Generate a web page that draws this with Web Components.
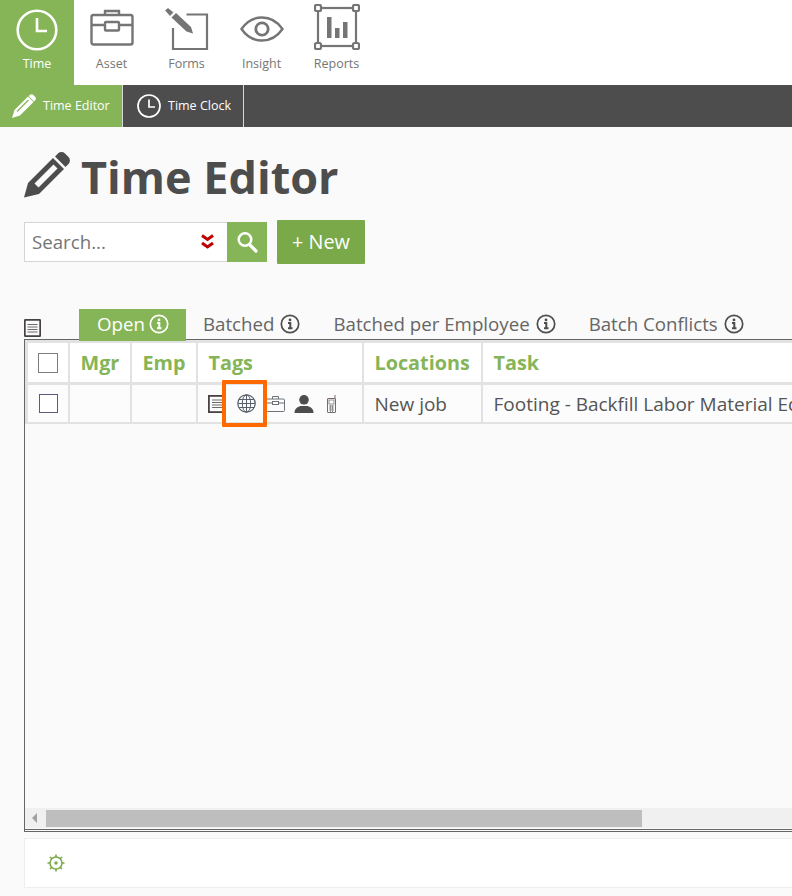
<!DOCTYPE html>
<html>
<head>
<meta charset="utf-8">
<title>Time Editor</title>
<style>
  html, body { margin: 0; height: 896px; overflow: hidden; background: #fafafa; }
  body { font-family: "Open Sans", "Liberation Sans", sans-serif; color: #4d4d4d; }
</style>
</head>
<body>
<app-nav>
  <nav-item label="Time" active>
    <svg width="44" height="44" viewBox="0 0 44 44" fill="none" stroke="#fff" stroke-width="2.6"><circle cx="22" cy="22" r="19.300"/><path d="M22 10v13h10" stroke-width="2.600"/></svg>
  </nav-item>
  <nav-item label="Asset">
    <svg width="44" height="44" viewBox="0 0 44 44" fill="none" stroke="#757575" stroke-width="2.4"><rect x="1.500" y="7" width="41" height="29.500" rx="2"/><path d="M1.500 17H15M29 17h13.500"/><path d="M15 7V3h14v4"/><rect x="15" y="14" width="14" height="8.500" rx="1"/></svg>
  </nav-item>
  <nav-item label="Forms">
    <svg width="44" height="44" viewBox="0 0 44 44" fill="none" stroke="#757575" stroke-width="2.200"><path d="M21.500 6.500H42V41H8V20"/><path d="M0.500 2.500 3 0.500 8 4.500 5 7.500z" fill="#757575" stroke="#757575" stroke-width="0.800" stroke-linejoin="round"/><path d="M6.500 9.500 11 5 26 19 28 25.500 21.500 23.500z" fill="#757575" stroke="none"/></svg>
  </nav-item>
  <nav-item label="Insight">
    <svg width="44" height="44" viewBox="0 0 44 44" fill="none" stroke="#757575" stroke-width="2.400"><path d="M1.500 21C7 13 14 9.500 22 9.500S37 13 42.500 21C37 29 30 32.500 22 32.500S7 29 1.500 21z"/><circle cx="22" cy="21" r="6.200" stroke-width="2.800"/></svg>
  </nav-item>
  <nav-item label="Reports">
    <svg style="margin-bottom:6px" width="46" height="46" viewBox="0 0 46 46" fill="none" stroke="#757575" stroke-width="2.200"><rect x="4" y="4" width="38" height="38"/><g fill="#fff"><rect x="1" y="1" width="6" height="6" rx="1.500"/><rect x="39" y="1" width="6" height="6" rx="1.500"/><rect x="1" y="39" width="6" height="6" rx="1.500"/><rect x="39" y="39" width="6" height="6" rx="1.500"/></g><g fill="#757575" stroke="none"><rect x="13" y="13" width="4.500" height="21"/><rect x="21" y="24" width="4.500" height="10"/><rect x="29" y="18" width="4.500" height="16"/></g></svg>
  </nav-item>
</app-nav>
<sub-nav>
  <sub-tab label="Time Editor" active>
    <svg width="26" height="26" viewBox="0 0 26 26"><path d="M1 25l2.500-8L17 3.500 22.500 9 9 22.500z" fill="#fff"/><path d="M18.500 2.200a3 3 0 0 1 4.200 0l1.200 1.200a3 3 0 0 1 0 4.200L23 8.500 17.600 3z" fill="#fff"/><path d="M6 18.500 17.500 7" stroke="#86b557" stroke-width="1.300"/></svg>
  </sub-tab>
  <sub-tab label="Time Clock">
    <svg width="24" height="24" viewBox="0 0 24 24" fill="none" stroke="#fff" stroke-width="1.700"><circle cx="12" cy="12" r="11"/><path d="M12 5.500v7.500h6"/></svg>
  </sub-tab>
</sub-nav>
<page-title>Time Editor</page-title>
<search-bar></search-bar>
<tab-strip>
  <tab-item active>Open</tab-item>
  <tab-item>Batched</tab-item>
  <tab-item>Batched per Employee</tab-item>
  <tab-item>Batch Conflicts</tab-item>
</tab-strip>
<time-grid></time-grid>
<foot-bar></foot-bar>

<script>
class AppNav extends HTMLElement {
  connectedCallback() {
    this.attachShadow({ mode: 'open' });
    this.shadowRoot.innerHTML = `
      <style>
        :host { display: flex; height: 85px; background: #fff; }
      </style>
      <slot></slot>
    `;
  }
}

class NavItem extends HTMLElement {
  connectedCallback() {
    this.attachShadow({ mode: 'open' });
    this.shadowRoot.innerHTML = `
      <style>
        :host {
          display: flex;
          flex-direction: column;
          align-items: center;
          width: 75px;
          height: 85px;
          box-sizing: border-box;
          padding-top: 6px;
          color: #757575;
          font-size: 12.500px;
        }
        :host([active]) { width: 74px; background: #86b557; color: #fff; }
        .icon { height: 48px; display: flex; align-items: center; }
        .label { line-height: 18px; margin-top: 1px; }
      </style>
      <div class="icon"><slot></slot></div>
      <div class="label">${this.getAttribute('label')}</div>
    `;
  }
}

class SubNav extends HTMLElement {
  connectedCallback() {
    this.attachShadow({ mode: 'open' });
    this.shadowRoot.innerHTML = `
      <style>
        :host { display: flex; height: 42px; background: #4d4d4d; }
      </style>
      <slot></slot>
    `;
  }
}

class SubTab extends HTMLElement {
  connectedCallback() {
    this.attachShadow({ mode: 'open' });
    this.shadowRoot.innerHTML = `
      <style>
        :host {
          display: flex;
          align-items: center;
          gap: 7px;
          width: 121px;
          box-sizing: border-box;
          padding-left: 14px;
          border-right: 1px solid #d8d8d8;
          color: #fff;
          font-size: 12.500px;
        }
        :host([active]) { width: 123px; padding-left: 11px; gap: 6px; background: #86b557; }
        svg { display: block; }
        span { margin-top: -2px; }
      </style>
      <slot></slot>
      <span>${this.getAttribute('label')}</span>
    `;
  }
}

class PageTitle extends HTMLElement {
  connectedCallback() {
    this.attachShadow({ mode: 'open' });
    this.shadowRoot.innerHTML = `
      <style>
        :host {
          display: flex;
          align-items: center;
          gap: 11px;
          padding: 25px 0 0 24px;
          height: 46px;
          color: #4d4d4d;
          font-size: 45px;
          font-weight: 700;
          line-height: 46px;
        }
        svg { display: block; }
        span { margin-top: 4px; }
      </style>
      <svg width="46" height="46" viewBox="0 0 46 46">
        <path d="M0 45.500 4 31 29 6 40 17 15 42z" fill="#4d4d4d"/>
        <path d="M31 4.500 34 1.500a5 5 0 0 1 7 0L44.500 5a5 5 0 0 1 0 7L41.500 15z" fill="#4d4d4d"/>
        <path d="M10.500 31.500 29.500 12.500 33.500 16.500 14.500 35.500z" fill="#fafafa"/>
      </svg>
      <span><slot></slot></span>
    `;
  }
}

class SearchBar extends HTMLElement {
  connectedCallback() {
    this.attachShadow({ mode: 'open' });
    this.shadowRoot.innerHTML = `
      <style>
        :host {
          display: flex;
          align-items: center;
          margin: 22px 0 0 24px;
          height: 44px;
        }
        .box {
          display: flex;
          align-items: center;
          justify-content: space-between;
          width: 203px;
          height: 40px;
          box-sizing: border-box;
          padding: 0 13px 0 7px;
          background: #fff;
          border: 1px solid #d5d5d5;
          border-right: 0;
          color: #757575;
          font-size: 18.700px;
        }
        .box span { margin-top: -2px; }
        .go {
          display: flex;
          align-items: center;
          justify-content: center;
          width: 40px;
          height: 40px;
          background: #86b557;
        }
        .new {
          display: flex;
          align-items: center;
          justify-content: center;
          margin-left: 10px;
          width: 88px;
          height: 44px;
          box-sizing: border-box;
          padding-bottom: 2px;
          background: #7aa949;
          border-radius: 1px;
          color: #fff;
          font-size: 19.800px;
        }
        svg { display: block; }
      </style>
      <div class="box">
        <span>Search...</span>
        <svg width="13" height="16" viewBox="0 0 13 16" fill="none" stroke="#c00000" stroke-width="3"><path d="M1 1.500 6.500 5.500 12 1.500"/><path d="M1 9 6.500 13 12 9"/></svg>
      </div>
      <div class="go">
        <svg width="22" height="22" viewBox="0 0 22 22" fill="none" stroke="#fff"><circle cx="9" cy="8.500" r="6.300" stroke-width="2.500"/><path d="M13.500 13.500 20 20" stroke-width="3.200" stroke-linecap="round"/></svg>
      </div>
      <div class="new">+ New</div>
    `;
  }
}

class TabStrip extends HTMLElement {
  connectedCallback() {
    this.attachShadow({ mode: 'open' });
    this.shadowRoot.innerHTML = `
      <style>
        :host {
          display: flex;
          align-items: flex-end;
          margin: 45px 0 0 24px;
          height: 32px;
          position: relative;
          z-index: 1;
        }
        svg { display: block; margin: 0 38px 4px 0; flex: none; }
      </style>
      <svg width="17" height="18" viewBox="0 0 17 18" fill="none"><rect x="0.800" y="0.800" width="15.400" height="16.400" rx="1" stroke="#4a4048" stroke-width="1.800"/><path d="M3.500 5.500h10M3.500 8h10M3.500 10.500h10M3.500 13h10" stroke="#6a6a6a"/></svg>
      <slot></slot>
    `;
  }
}

class TabItem extends HTMLElement {
  connectedCallback() {
    this.attachShadow({ mode: 'open' });
    const on = this.hasAttribute('active');
    const c = on ? '#fff' : '#4d4d4d';
    this.shadowRoot.innerHTML = `
      <style>
        :host {
          display: flex;
          align-items: center;
          gap: 6px;
          height: 32px;
          box-sizing: border-box;
          padding: 0 16px 4px 17px;
          white-space: nowrap;
          color: #666;
          font-size: 18.700px;
        }
        :host([active]) { width: 107px; padding-left: 18px; padding-right: 0; gap: 4.500px; background: #86b557; color: #fff; }
        svg { display: block; margin-top: 2px; flex: none; }
      </style>
      <span><slot></slot></span>
      <svg width="20" height="20" viewBox="0 0 20 20" fill="none" stroke="${c}" stroke-width="1.700"><circle cx="10" cy="10" r="8.700"/><path d="M8 9h2.300v5M8 14.300h4.500" stroke-width="2"/><circle cx="10" cy="5.900" r="1.400" fill="${c}" stroke="none"/></svg>
    `;
  }
}

class TimeGrid extends HTMLElement {
  connectedCallback() {
    this.attachShadow({ mode: 'open' });
    this.shadowRoot.innerHTML = `
      <style>
        :host {
          display: flex;
          flex-direction: column;
          position: relative;
          margin: -2px -60px 0 24px;
          height: 489px;
          border-top: 1px solid #666;
          border-left: 1px solid #666;
          border-bottom: 3px double #666;
          background: #fafafa;
        }
        .grid {
          display: grid;
          grid-template-columns: 40px 60px 64px 164px 117px 1fr;
          grid-template-rows: 39px 37px;
          gap: 3px 2px;
          padding: 3px 0 2px 3px;
          background: #e2e2e2;
          flex: none;
          color: #555;
          font-size: 19px;
        }
        .grid > div { background: #fff; display: flex; align-items: center; padding-left: 10.500px; white-space: nowrap; overflow: hidden; }
        .grid > .head { color: #86b557; font-weight: 700; font-size: 19.800px; }
        .grid > .check { padding-left: 0; justify-content: center; }
        .grid > .row { background: #fcfcfc; }
        .grid > .tags { padding-left: 10px; }
        .box { width: 20px; height: 20px; border: 1.500px solid #7d7d7d; box-sizing: border-box; background: #fff; }
        .box.small { width: 19px; height: 19px; border: 1.200px solid #5c5a7e; }
        svg { display: block; flex: none; }
        .space { flex: 1; }
        .scroll {
          flex: none;
          display: flex;
          align-items: flex-start;
          height: 20px;
          margin-bottom: 1px;
          background: #f0f0f0;
        }
        .arrow { width: 0; height: 0; margin: 5px 0 0 7px; border: 5px solid transparent; border-right: 5px solid #a0a0a0; border-left: 0; }
        .thumb { margin: 2px 0 0 9px; width: 596px; height: 17px; background: #bebebe; }
        .mark {
          position: absolute;
          left: 197px;
          top: 40px;
          width: 37px;
          height: 39px;
          border: 4px solid #ff6a00;
          border-radius: 1px;
        }
      </style>
      <div class="grid">
        <div class="head check"><div class="box"></div></div>
        <div class="head">Mgr</div>
        <div class="head">Emp</div>
        <div class="head">Tags</div>
        <div class="head">Locations</div>
        <div class="head">Task</div>
        <div class="row check"><div class="box small"></div></div>
        <div class="row"></div>
        <div class="row"></div>
        <div class="row tags">
          <svg width="18" height="18" viewBox="0 0 18 18" fill="none"><rect x="0.900" y="0.900" width="16.200" height="16.200" stroke="#4a4048" stroke-width="1.800"/><path d="M4 5h10M4 7.500h10M4 10h10M4 12.500h10" stroke="#6a6a6a"/></svg>
          <svg style="margin-left:11px" width="19" height="19" viewBox="0 0 19 19" fill="none" stroke="#56606b" stroke-width="1"><circle cx="9.500" cy="9.500" r="8.700" stroke-width="1.200"/><ellipse cx="9.500" cy="9.500" rx="4.200" ry="8.700"/><path d="M9.500 1v17M1 9.500h17M2 5.500h15M2 13.500h15"/></svg>
          <svg style="margin-left:10px" width="19" height="17" viewBox="0 0 19 17" fill="none" stroke="#6d7378" stroke-width="1"><rect x="0.500" y="4" width="18" height="12.500" rx="1"/><path d="M0.500 8h18M6.500 4V1.500h6V4"/><rect x="6.500" y="6.500" width="6" height="3" fill="#fff"/></svg>
          <svg style="margin-left:9px" width="20" height="18" viewBox="0 0 20 18" fill="#4d4d4d"><circle cx="10" cy="4.800" r="4.800"/><path d="M0.500 18c0-4 2.500-6 6-7h7c3.500 1 6 3 6 7z"/></svg>
          <svg style="margin-left:13px" width="9" height="18" viewBox="0 0 9 18" fill="none" stroke="#6a5a5a" stroke-width="0.900"><rect x="0.500" y="3.500" width="8" height="14" rx="0.500"/><rect x="2" y="5" width="5" height="4" stroke="#8a8a8a"/><path d="M2 11h5M2 13h5M2 15h5M3.500 10v7M5.500 10v7" stroke="#8a8a8a"/><path d="M8 3.500V0"/></svg>
        </div>
        <div class="row">New job</div>
        <div class="row">Footing - Backfill Labor Material Equipment</div>
      </div>
      <div class="space"></div>
      <div class="scroll"><div class="arrow"></div><div class="thumb"></div></div>
      <div class="mark"></div>
    `;
  }
}

class FootBar extends HTMLElement {
  connectedCallback() {
    this.attachShadow({ mode: 'open' });
    this.shadowRoot.innerHTML = `
      <style>
        :host {
          display: flex;
          align-items: center;
          margin: 6px -60px 0 24px;
          height: 50px;
          box-sizing: border-box;
          padding-left: 21px;
          background: #fff;
          border: 1px solid #eee;
        }
        svg { display: block; }
      </style>
      <svg width="20" height="20" viewBox="0 0 20 20" fill="none" stroke="#7aa949">
        <circle cx="10" cy="10" r="6" stroke-width="1.500"/>
        <circle cx="10" cy="10" r="1.700" fill="#7aa949" stroke="none"/>
        <path d="M10 1.500v2.500M10 16v2.500M1.500 10H4M16 10h2.500M4 4l1.800 1.800M14.200 14.200 16 16M16 4l-1.800 1.800M5.800 14.200 4 16" stroke-width="1.600"/>
      </svg>
    `;
  }
}

customElements.define('app-nav', AppNav);
customElements.define('nav-item', NavItem);
customElements.define('sub-nav', SubNav);
customElements.define('sub-tab', SubTab);
customElements.define('page-title', PageTitle);
customElements.define('search-bar', SearchBar);
customElements.define('tab-strip', TabStrip);
customElements.define('tab-item', TabItem);
customElements.define('time-grid', TimeGrid);
customElements.define('foot-bar', FootBar);
</script>
</body>
</html>
